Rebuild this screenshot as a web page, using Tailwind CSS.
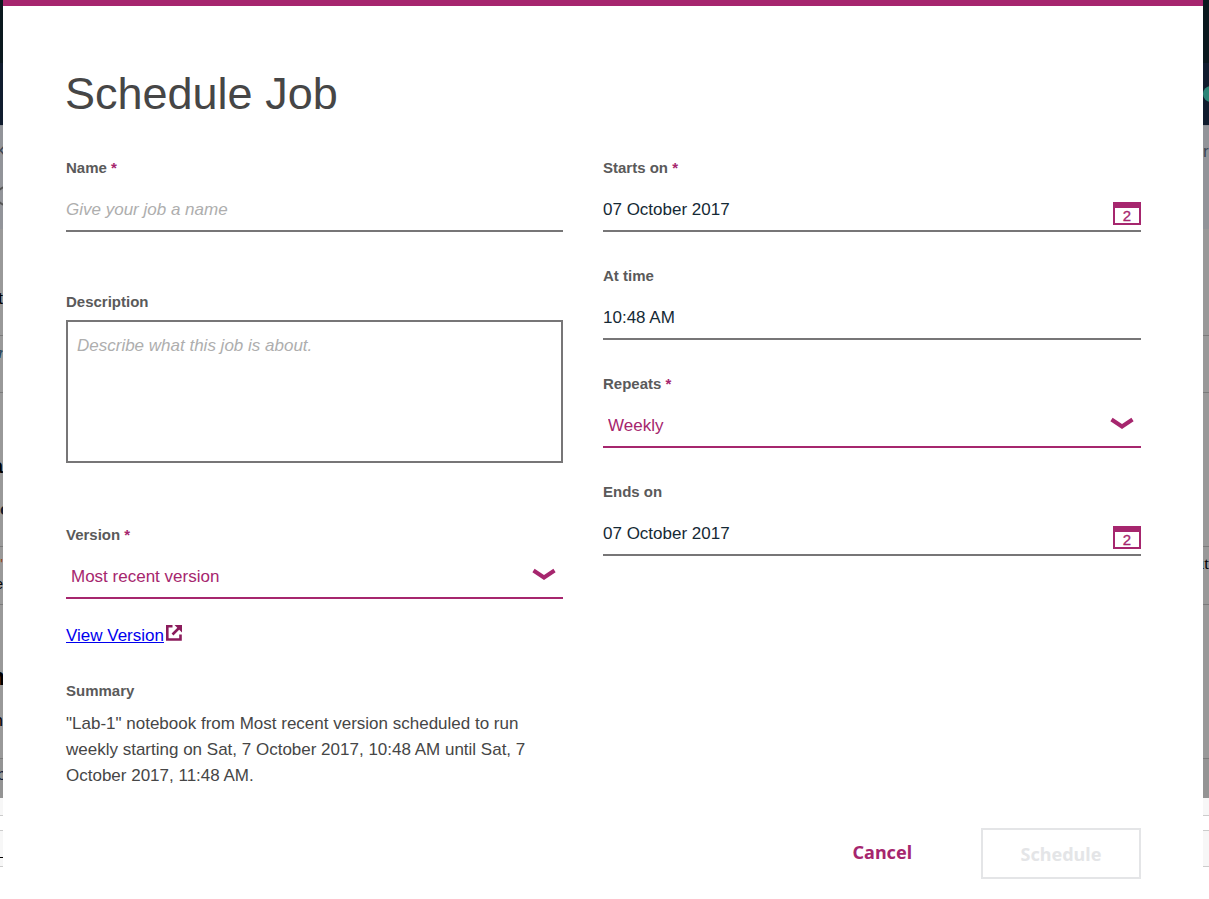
<!DOCTYPE html>
<html lang="en">
<head>
<meta charset="utf-8">
<meta name="viewport" content="width=device-width, initial-scale=1">
<title>Schedule Job</title>
<script src="https://cdn.jsdelivr.net/npm/@tailwindcss/browser@4"></script>
</head>
<body class="relative min-h-screen bg-white font-['Liberation_Sans',Arial,sans-serif] text-[17px] text-[#464646]">

<!-- Dimmed page behind the dialog -->
<div class="absolute inset-0 overflow-hidden" aria-hidden="true">
  <div class="h-[63px] bg-[#0a181e]"></div>
  <div class="flex h-[62px] items-center justify-end bg-[#101c2e]"><span class="-mr-[10px] size-4 rounded-full bg-[#2b8577]"></span></div>
  <div class="flex h-[104px] flex-col justify-start gap-6 border-t border-[#868a90] bg-[#929499] pt-4 leading-5 text-[#3c4653]">
    <div class="flex justify-between"><span class="flex w-[3px] justify-center overflow-hidden">K</span><span class="w-[6px] overflow-hidden">r</span></div>
    <div class="-ml-1 size-5 rounded-full border-2 border-[#555]"></div>
  </div>
  <div class="h-[107px] border-b border-[#7b7b7b] bg-[#999] pt-[60px] leading-5 text-black"><span class="flex w-[3px] justify-end overflow-hidden">t</span></div>
  <div class="h-[57px] border-b border-[#7b7b7b] bg-[#999] pt-[7px] font-['Liberation_Serif',serif] leading-5 text-[#23445a]"><span class="flex w-[3px] justify-center overflow-hidden italic">r</span></div>
  <div class="flex h-[154px] flex-col gap-6 border-b border-[#7b7b7b] bg-[#999] pt-[63px] leading-5 text-black">
    <span class="flex w-[3px] justify-end overflow-hidden text-xl leading-5 font-bold">a</span>
    <span class="w-[3px] overflow-hidden font-bold text-[#101c2e]">e</span>
  </div>
  <div class="flex h-[58px] items-start justify-between border-b border-[#7b7b7b] bg-[#999] pt-[7px] leading-5 text-black">
    <span class="flex w-[3px] flex-col items-end overflow-hidden text-sm"><span class="text-[#9a4210]">'</span><span>e</span></span>
    <span class="flex w-[6px] justify-end overflow-hidden font-['Liberation_Serif',serif]">ut</span>
  </div>
  <div class="flex h-[154px] flex-col gap-6 border-b border-[#7b7b7b] bg-[#999] pt-[62px] leading-5 text-black">
    <span class="flex w-[3px] justify-end overflow-hidden text-2xl leading-5 font-bold"><span class="-mr-0.5">n</span></span>
    <span class="flex w-[3px] justify-end overflow-hidden">n</span>
  </div>
  <div class="h-[39px] bg-[#949494] pt-1.5 leading-5 text-[#10203c]"><span class="flex w-[3px] justify-center overflow-hidden">b</span></div>
  <div class="h-[18px] border-b border-[#ccc] bg-[#f7f7f7]"></div>
  <div class="h-[14px] bg-white"></div>
  <div class="h-[37px] border-y border-[#ccc] bg-[#f7f7f7] pt-[26px]"><div class="h-px w-[3px] bg-black"></div></div>
</div>

<main role="dialog" aria-labelledby="title" class="relative mr-[6px] ml-[3px] min-h-screen border-t-6 border-[#a6266e] bg-white px-[62px] pt-[61px] pb-5">
  <h1 id="title" class="text-[45px] leading-[54px]">Schedule Job</h1>

  <form>
    <div class="mt-[37px] grid grid-cols-[497fr_538fr] gap-10 pl-px">
      <div>
        <label for="name" class="block text-[15px] leading-5 font-bold text-[#5a5a5a]">Name <span class="text-[#a6266e]">*</span></label>
        <input id="name" type="text" placeholder="Give your job a name" class="mt-2.5 block h-11 w-full border-b-2 border-[#777677] pt-0.5 outline-none placeholder:text-[#aeaeae] placeholder:italic">

        <label for="description" class="mt-[60px] block text-[15px] leading-5 font-bold text-[#5a5a5a]">Description</label>
        <textarea id="description" placeholder="Describe what this job is about." class="mt-2 block h-[143px] w-full resize-none border-2 border-[#777677] px-[9px] py-3.5 leading-5 outline-none placeholder:text-[#aeaeae] placeholder:italic"></textarea>

        <label for="version" class="mt-[62px] block text-[15px] leading-5 font-bold text-[#5a5a5a]">Version <span class="text-[#a6266e]">*</span></label>
        <div class="relative mt-2.5">
          <select id="version" class="block h-11 w-full appearance-none border-b-2 border-[#a6266e] pt-0.5 pl-[5px] text-[#a6266e] outline-none"><option>Most recent version</option></select>
          <svg class="pointer-events-none absolute top-[13px] right-[7px]" width="24" height="13" viewBox="0 0 24 13" fill="none" stroke="#a6266e" stroke-width="4"><path d="M1.500 2.500L12 9.500l10.500-7"/></svg>
        </div>

        <a href="#" class="mt-[26px] flex items-start gap-0.5 leading-[22px] text-[#0000ee]"><span class="underline">View Version</span>
          <svg width="16" height="16" viewBox="0 0 16 16" fill="none" stroke="#8b1c5c" stroke-width="2.600"><path d="M6.500 1.300H1.300v13.200h13.200V9.500M6.500 9.500L13 3"/><path d="M8.500 0H16v7.500z" fill="#8b1c5c" stroke="none"/></svg>
        </a>

        <h2 class="mt-[34px] text-[15px] leading-5 font-bold text-[#5a5a5a]">Summary</h2>
        <p class="mt-[10px] leading-[26px]">"Lab-1" notebook from Most recent version scheduled to run weekly starting on Sat, 7 October 2017, 10:48 AM until Sat, 7 October 2017, 11:48 AM.</p>
      </div>

      <div class="flex flex-col gap-[34px]">
        <div>
          <label for="start" class="block text-[15px] leading-5 font-bold text-[#5a5a5a]">Starts on <span class="text-[#a6266e]">*</span></label>
          <div class="relative mt-2.5">
            <input id="start" type="text" value="07 October 2017" class="block h-11 w-full border-b-2 border-[#777677] pt-0.5 text-[#152935] outline-none">
            <svg class="pointer-events-none absolute top-[14px] right-0" width="28" height="23" viewBox="0 0 28 23"><path d="M1 3v19h26V3" fill="none" stroke="#a6266e" stroke-width="2"/><path d="M0 0h28v6H0z" fill="#a6266e"/><text x="14" y="19" text-anchor="middle" font-size="15" fill="#a6266e" stroke="#a6266e" stroke-width=".3">2</text></svg>
          </div>
        </div>
        <div>
          <label for="time" class="block text-[15px] leading-5 font-bold text-[#5a5a5a]">At time</label>
          <input id="time" type="text" value="10:48 AM" class="mt-2.5 block h-11 w-full border-b-2 border-[#777677] pt-0.5 text-[#152935] outline-none">
        </div>
        <div>
          <label for="repeats" class="block text-[15px] leading-5 font-bold text-[#5a5a5a]">Repeats <span class="text-[#a6266e]">*</span></label>
          <div class="relative mt-2.5">
            <select id="repeats" class="block h-11 w-full appearance-none border-b-2 border-[#a6266e] pt-0.5 pl-[5px] text-[#a6266e] outline-none"><option>Weekly</option></select>
            <svg class="pointer-events-none absolute top-[13px] right-[7px]" width="24" height="13" viewBox="0 0 24 13" fill="none" stroke="#a6266e" stroke-width="4"><path d="M1.500 2.500L12 9.500l10.500-7"/></svg>
          </div>
        </div>
        <div>
          <label for="end" class="block text-[15px] leading-5 font-bold text-[#5a5a5a]">Ends on</label>
          <div class="relative mt-2.5">
            <input id="end" type="text" value="07 October 2017" class="block h-11 w-full border-b-2 border-[#777677] pt-0.5 text-[#152935] outline-none">
            <svg class="pointer-events-none absolute top-[14px] right-0" width="28" height="23" viewBox="0 0 28 23"><path d="M1 3v19h26V3" fill="none" stroke="#a6266e" stroke-width="2"/><path d="M0 0h28v6H0z" fill="#a6266e"/><text x="14" y="19" text-anchor="middle" font-size="15" fill="#a6266e" stroke="#a6266e" stroke-width=".3">2</text></svg>
          </div>
        </div>
      </div>
    </div>

    <div class="mt-[39px] flex justify-end gap-[69px] font-['Noto_Sans',sans-serif] text-lg font-bold">
      <button type="button" class="h-12 text-[#a6266e]">Cancel</button>
      <button type="submit" disabled class="h-[51px] w-40 border-2 border-[#e4e5e7] text-[#e4e5e7]">Schedule</button>
    </div>
  </form>
</main>
</body>
</html>
